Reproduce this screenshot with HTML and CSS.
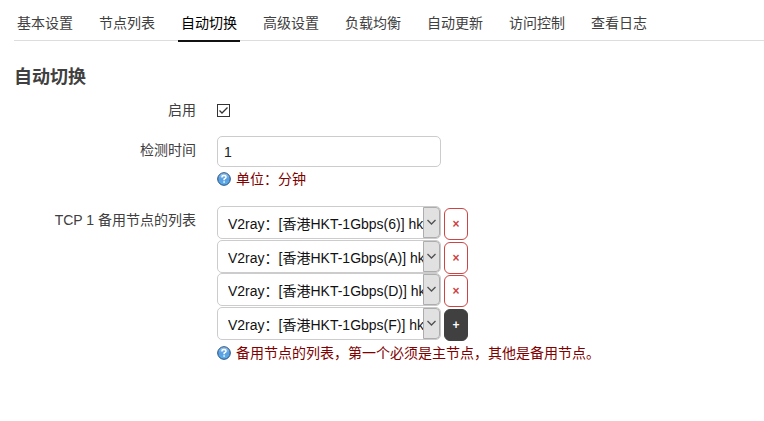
FILE: index.html
```html
<!DOCTYPE html>
<html lang="zh-CN">
<head>
  <meta charset="UTF-8">
  <title>自动切换</title>
  <link rel="stylesheet" href="styles.css">
</head>
<body>
<!--图标-->
<svg class="defs" aria-hidden="true">
  <defs>
    <linearGradient id="ball" x1="0" y1="0" x2="0" y2="1">
      <stop offset="0" stop-color="#9ccaf2"/>
      <stop offset="0.5" stop-color="#5a9fe0"/>
      <stop offset="1" stop-color="#58b0f0"/>
    </linearGradient>
  </defs>
  <symbol id="help" viewBox="0 0 14 14">
    <circle cx="7" cy="7" r="6.3" fill="url(#ball)" stroke="#234c7c"/>
    <path d="M5 5.6V5q0-1.4 2-1.4T9.1 5.1Q9.1 6.2 7.1 7.2V8.2M7.1 9.3V10.7" fill="none" stroke="#fff" stroke-width="1.5"/>
  </symbol>
  <symbol id="arrow" viewBox="0 0 15 29">
    <path d="M3.5 12L7.5 16L11.5 12" fill="none" stroke="#505050" stroke-width="1.3"/>
  </symbol>
</svg>

<ul class="tabs">
  <li><a href="#">基本设置</a></li>
  <li><a href="#">节点列表</a></li>
  <li class="active"><a href="#">自动切换</a></li>
  <li><a href="#">高级设置</a></li>
  <li><a href="#">负载均衡</a></li>
  <li><a href="#">自动更新</a></li>
  <li><a href="#">访问控制</a></li>
  <li><a href="#">查看日志</a></li>
</ul>

<form class="section">
  <h3>自动切换</h3>
  <div class="row">
    <label class="title" for="enable">启用</label>
    <div class="field">
      <span class="check">
        <input type="checkbox" id="enable" checked>
        <svg viewBox="0 0 13 13"><path d="M2.5 6.5L5 9L10.5 3.5" fill="none" stroke="#333" stroke-width="1.3"/></svg>
      </span>
    </div>
  </div>
  <div class="row row-time">
    <label class="title" for="time">检测时间</label>
    <div class="field">
      <input class="text" type="text" id="time" value="1">
      <div class="desc"><svg class="help"><use href="#help"/></svg>单位：分钟</div>
    </div>
  </div>
  <div class="row">
    <label class="title" for="node1">TCP 1 备用节点的列表</label>
    <div class="field">
      <div class="item">
        <div class="select">
          <select id="node1"><option>V2ray：[香港HKT-1Gbps(6)] hk</option></select>
          <svg class="arrow"><use href="#arrow"/></svg>
        </div>
        <button class="btn remove" type="button" aria-label="删除">×</button>
      </div>
      <div class="item">
        <div class="select">
          <select aria-label="备用节点 2"><option>V2ray：[香港HKT-1Gbps(A)] hk</option></select>
          <svg class="arrow"><use href="#arrow"/></svg>
        </div>
        <button class="btn remove" type="button" aria-label="删除">×</button>
      </div>
      <div class="item">
        <div class="select">
          <select aria-label="备用节点 3"><option>V2ray：[香港HKT-1Gbps(D)] hk</option></select>
          <svg class="arrow"><use href="#arrow"/></svg>
        </div>
        <button class="btn remove" type="button" aria-label="删除">×</button>
      </div>
      <div class="item">
        <div class="select">
          <select aria-label="备用节点 4"><option>V2ray：[香港HKT-1Gbps(F)] hk</option></select>
          <svg class="arrow"><use href="#arrow"/></svg>
        </div>
        <button class="btn add" type="button" aria-label="添加">+</button>
      </div>
      <div class="desc"><svg class="help"><use href="#help"/></svg>备用节点的列表，第一个必须是主节点，其他是备用节点。</div>
    </div>
  </div>
</form>
</body>
</html>
```
FILE: styles.css
```css
* {
  margin: 0;
  padding: 0;
  box-sizing: border-box;
}

body {
  padding: 6px 0 0 14px;
  background-color: #fff;
  color: #404040;
  font: 14px/20px "Liberation Sans", "Noto Sans CJK SC", sans-serif;
}

input,
select,
button {
  font: inherit;
}

.defs {
  position: absolute;
  width: 0;
  height: 0;
}

/* 选项卡 */
.tabs {
  display: flex;
  gap: 20px;
  height: 35px;
  border-bottom: 1px solid #ddd;
  list-style: none;
}

.tabs li {
  flex: none;
  height: 36px;
  padding: 7px 3px 0;
}

.tabs a {
  color: #404040;
  text-decoration: none;
}

.tabs .active {
  border-bottom: 2px solid #111;
}

.tabs .active a {
  color: #000;
}

h3 {
  margin-top: 24px;
  font-size: 18px;
  line-height: 24px;
}

/* 表单行 */
.row {
  display: flex;
  gap: 21px;
  padding-top: 11px;
}

.row-time {
  padding: 16px 0 6px;
}

.title {
  flex: none;
  width: 182px;
  text-align: right;
}

.row .title {
  padding-top: 4px;
}

.row:first-of-type .title {
  padding-top: 0;
}

.field {
  flex: 1;
  min-width: 0;
}

.check {
  display: block;
  position: relative;
  width: 13px;
  height: 13px;
  margin: 4px 0 3px;
}

.check input {
  appearance: none;
  display: block;
  width: 13px;
  height: 13px;
  border: 1px solid #333;
  background-color: #fff;
}

.check svg {
  display: none;
  position: absolute;
  top: 0;
  left: 0;
  width: 13px;
  height: 13px;
  pointer-events: none;
}

.check input:checked + svg {
  display: block;
}

.text {
  display: block;
  width: 224px;
  height: 31px;
  padding: 0 6px;
  border: 1px solid #ccc;
  border-radius: 5px;
  color: #222;
}

.item {
  display: flex;
  gap: 3px;
  height: 34px;
}

.item:nth-child(2) {
  height: 33px;
}

.select {
  position: relative;
  width: 224px;
  height: 33px;
}

.select select {
  appearance: none;
  display: block;
  width: 100%;
  height: 100%;
  padding: 3px 17px 0 10px;
  border: 1px solid #ccc;
  border-radius: 5px;
  background-color: #fff;
  color: #111;
}

.arrow {
  position: absolute;
  top: 1px;
  right: 1px;
  width: 17px;
  height: 31px;
  border: 1px solid #adadad;
  border-radius: 0 4px 4px 0;
  background-color: #e1e1e1;
  pointer-events: none;
}

.btn {
  width: 24px;
  height: 32px;
  margin-top: 2px;
  border: 1px solid #404040;
  border-radius: 6px;
  font-size: 12px;
  font-weight: bold;
  line-height: 30px;
  cursor: pointer;
}

.remove {
  border-color: #c44;
  background-color: #fff;
  color: #c44;
}

.add {
  background-color: #404040;
  color: #fff;
}

.desc {
  display: flex;
  align-items: center;
  gap: 5px;
  padding-top: 2px;
  color: #800000;
}

.help {
  width: 14px;
  height: 14px;
}
```
